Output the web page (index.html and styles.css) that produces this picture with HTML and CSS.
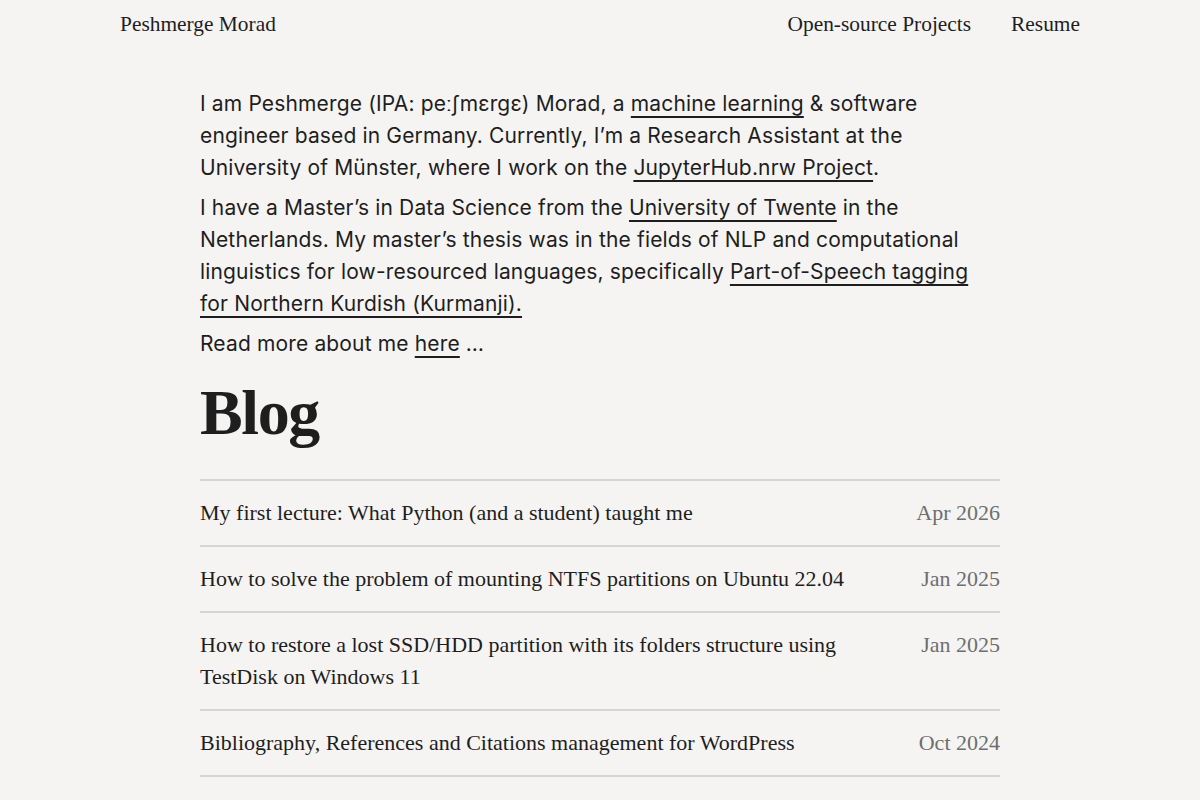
FILE: index.html
```html
<!DOCTYPE html>
<html lang="en">

<head>
    <meta charset="UTF-8">
    <meta name="viewport" content="width=device-width, initial-scale=1.0">
    <title>Peshmerge Morad</title>
    <link rel="stylesheet" href="styles.css">
</head>

<body>
    <header class="site-header">
        <a class="site-title" href="#">Peshmerge Morad</a>
        <nav class="site-nav">
            <a href="#">Open-source Projects</a>
            <a href="#">Resume</a>
        </nav>
    </header>

    <main class="content">
        <section class="intro">
            <p>I am Peshmerge (IPA: peːʃmɛrgɛ) Morad, a <a href="#">machine learning</a> &amp; software engineer based in Germany. Currently, I’m a Research Assistant at the University of Münster, where I work on the <a href="#">JupyterHub.nrw Project</a>.</p>
            <p>I have a Master’s in Data Science from the <a href="#">University of Twente</a> in the Netherlands. My master’s thesis was in the fields of NLP and computational linguistics for low-resourced languages, specifically <a href="#">Part-of-Speech tagging for Northern Kurdish (Kurmanji).</a></p>
            <p>Read more about me <a href="#">here</a> …</p>
        </section>

        <h1 class="blog-title">Blog</h1>
        <ul class="posts">
            <li class="post">
                <a href="#">My first lecture: What Python (and a student) taught me</a>
                <span class="post-date">Apr 2026</span>
            </li>
            <li class="post">
                <a href="#">How to solve the problem of mounting NTFS partitions on Ubuntu 22.04</a>
                <span class="post-date">Jan 2025</span>
            </li>
            <li class="post">
                <a href="#">How to restore a lost SSD/HDD partition with its folders structure using TestDisk on Windows 11</a>
                <span class="post-date">Jan 2025</span>
            </li>
            <li class="post">
                <a href="#">Bibliography, References and Citations management for WordPress</a>
                <span class="post-date">Oct 2024</span>
            </li>
        </ul>
    </main>
</body>

</html>
```

FILE: styles.css
```css
/* base */
body {
    margin: 0;
    background-color: #f5f4f2;
    color: #1e1e1e;
    font-family: "Liberation Serif", "Times New Roman", serif;
    font-size: 22px;
}
a {
    color: inherit;
    text-decoration: none;
}

/* header */
.site-header {
    display: flex;
    justify-content: space-between;
    align-items: center;
    height: 48px;
    padding: 0 120px;
    font-size: 21.4px;
}
.site-nav {
    display: flex;
    gap: 40px;
}

/* main column */
.content {
    width: 800px;
    margin: 0 auto;
    padding-top: 40px;
}
.intro {
    font-family: "Inter", "Noto Sans", sans-serif;
    font-size: 21px;
    line-height: 32px;
    letter-spacing: 0.15px;
}
.intro p {
    margin: 0 0 8px;
}
.intro a {
    text-decoration: underline;
    text-decoration-thickness: 2px;
    text-underline-offset: 5px;
}

.blog-title {
    font-size: 64px;
    font-weight: bold;
    line-height: 1;
    margin: 21px 0 34px;
    letter-spacing: -1.4px;
}

/* post list */
.posts {
    list-style: none;
    margin: 0;
    padding: 0;
    border-bottom: 2px solid #d6d5d3;
}
.post {
    display: flex;
    justify-content: space-between;
    align-items: flex-start;
    gap: 60px;
    padding: 16px 0;
    line-height: 32px;
    border-top: 2px solid #d6d5d3;
}
.post-date {
    color: #6e6e6e;
    white-space: nowrap;
}
```
